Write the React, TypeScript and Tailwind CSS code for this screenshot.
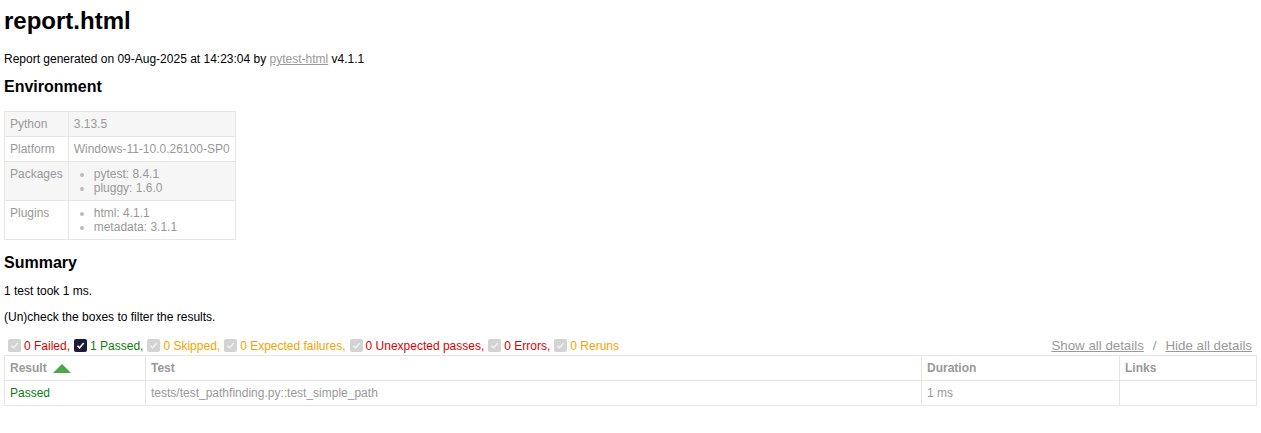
const envRows: { name: string; value: string | string[] }[] = [
  { name: 'Python', value: '3.13.5' },
  { name: 'Platform', value: 'Windows-11-10.0.26100-SP0' },
  { name: 'Packages', value: ['pytest: 8.4.1', 'pluggy: 1.6.0'] },
  { name: 'Plugins', value: ['html: 4.1.1', 'metadata: 3.1.1'] },
]

type Filter = { label: string; color: string; checked?: boolean; last?: boolean }

const filters: Filter[] = [
  { label: '0 Failed', color: 'text-[#e00000]' },
  { label: '1 Passed', color: 'text-[#0a800a]', checked: true },
  { label: '0 Skipped', color: 'text-[#f5a200]' },
  { label: '0 Expected failures', color: 'text-[#f5a200]' },
  { label: '0 Unexpected passes', color: 'text-[#e00000]' },
  { label: '0 Errors', color: 'text-[#e00000]' },
  { label: '0 Reruns', color: 'text-[#f5a200]', last: true },
]

function CheckBox({ checked }: { checked?: boolean }) {
  return (
    <span
      className={`ml-[4px] mr-[3px] inline-flex h-[13px] w-[13px] shrink-0 items-center justify-center rounded-[2px] ${
        checked ? 'bg-[#1c1b3a]' : 'bg-[#d3d3d3]'
      }`}>
      <svg width="9" height="9" viewBox="0 0 10 10">
        <path
          d="M1.6 5.2 L4 7.6 L8.6 2.2"
          fill="none"
          stroke={checked ? '#ffffff' : '#f0f0f0'}
          strokeWidth="1.7"
        />
      </svg>
    </span>
  )
}

export default function App() {
  return (
    <div className="min-h-[433px] bg-white px-[4px] font-['Liberation_Sans',Arial,sans-serif] text-[12px] text-[#999]">
      <h1 className="mt-[7px] text-[24px] font-bold leading-[28px] text-black">report.html</h1>
      <p className="mt-[17px] leading-[14px] text-black">
        Report generated on 09-Aug-2025 at 14:23:04 by{' '}
        <a className="text-[#999] underline">pytest-html</a> v4.1.1
      </p>

      <h2 className="mt-[12px] text-[16px] font-bold leading-[18px] text-black">Environment</h2>
      <table className="mt-[15px] border-collapse leading-[14px]">
        <tbody>
          {envRows.map((row, i) => (
            <tr key={row.name} className={i % 2 === 0 ? 'bg-[#f6f6f6]' : 'bg-white'}>
              <td className="border border-[#e6e6e6] p-[5px] align-top">{row.name}</td>
              <td className="border border-[#e6e6e6] p-[5px] align-top">
                {Array.isArray(row.value) ? (
                  <ul className="list-disc pl-[20px] marker:text-[#bbb]">
                    {row.value.map(v => (
                      <li key={v}>{v}</li>
                    ))}
                  </ul>
                ) : (
                  row.value
                )}
              </td>
            </tr>
          ))}
        </tbody>
      </table>

      <h2 className="mt-[14px] text-[16px] font-bold leading-[18px] text-black">Summary</h2>
      <p className="mt-[12px] leading-[14px] text-black">1 test took 1 ms.</p>
      <p className="mt-[12px] leading-[14px] text-black">(Un)check the boxes to filter the results.</p>

      <div className="mt-[14px] flex h-[15px] items-center justify-between leading-[14px]">
        <div className="flex items-center">
          {filters.map(f => (
            <span key={f.label} className="flex items-center">
              <CheckBox checked={f.checked} />
              <span className={f.color}>
                {f.label}
                {f.last ? '' : ','}
              </span>
            </span>
          ))}
        </div>
        <div className="mr-[5px] text-[13.3px]">
          <a className="underline">Show all details</a>
          <span className="mx-[9px]">/</span>
          <a className="underline">Hide all details</a>
        </div>
      </div>

      <table className="mt-[2px] w-full border-collapse border border-[#e6e6e6] text-left leading-[14px]">
        <thead>
          <tr>
            <th className="w-[141px] border border-[#e6e6e6] p-[5px] font-bold">
              <span className="flex items-center">
                Result
                <svg className="ml-[6px]" width="18" height="9" viewBox="0 0 18 9">
                  <path d="M9 0 L18 9 L0 9 Z" fill="#4aa84a" />
                </svg>
              </span>
            </th>
            <th className="border border-[#e6e6e6] p-[5px] font-bold">Test</th>
            <th className="w-[198px] border border-[#e6e6e6] p-[5px] font-bold">Duration</th>
            <th className="w-[137px] border border-[#e6e6e6] p-[5px] font-bold">Links</th>
          </tr>
        </thead>
        <tbody>
          <tr>
            <td className="border border-[#e6e6e6] p-[5px] text-[#0a800a]">Passed</td>
            <td className="border border-[#e6e6e6] p-[5px]">tests/test_pathfinding.py::test_simple_path</td>
            <td className="border border-[#e6e6e6] p-[5px]">1 ms</td>
            <td className="border border-[#e6e6e6] p-[5px]"></td>
          </tr>
        </tbody>
      </table>
    </div>
  )
}
